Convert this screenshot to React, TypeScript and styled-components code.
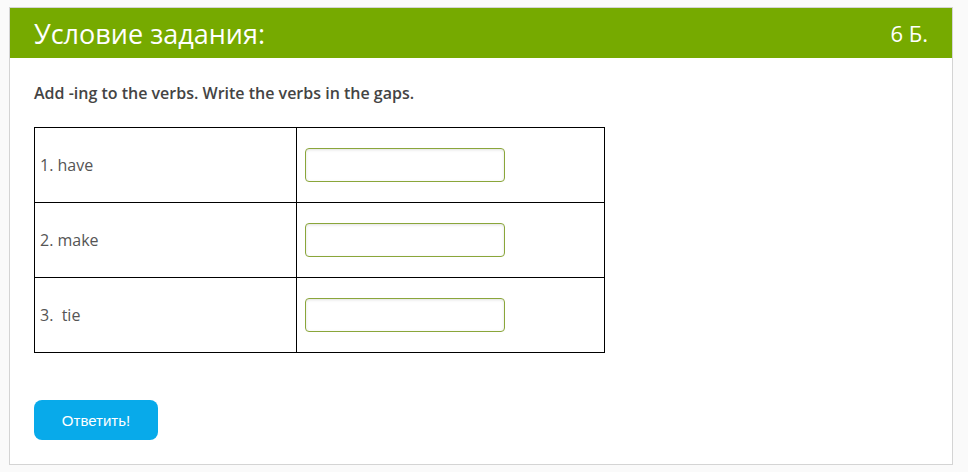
import React from 'react';
import styled, { createGlobalStyle } from 'styled-components';

const GlobalStyle = createGlobalStyle`
  html, body {
    margin: 0;
    padding: 0;
    background: #fafafa;
    font-family: "Open Sans", "Liberation Sans", sans-serif;
  }
`;

const Page = styled.div`
  padding: 7px 15px 6px 9px;
`;

const Card = styled.div`
  background: #fff;
  border: 1px solid #d4d4d4;
  height: 458px;
  box-sizing: border-box;
  display: flex;
  flex-direction: column;
`;

const Header = styled.div`
  background: #76aa00;
  color: #fff;
  height: 50px;
  display: flex;
  align-items: center;
  justify-content: space-between;
  padding: 0 24px 0 24px;
`;

const Title = styled.h2`
  margin: 0;
  font-size: 27px;
  font-weight: 400;
`;

const Points = styled.span`
  font-size: 22px;
`;

const Body = styled.div`
  padding: 23px 24px 0 24px;
`;

const Task = styled.p`
  margin: 0 0 22px 0;
  font-size: 16px;
  font-weight: 600;
  color: #444;
  line-height: 24px;
`;

const Table = styled.table`
  border-collapse: collapse;
  table-layout: fixed;
  width: 571px;
`;

const Row = styled.tr`
  height: 75px;
`;

const Cell = styled.td<{ $w?: number }>`
  border: 1px solid #000;
  padding: 0 8px 0 5px;
  font-size: 16px;
  color: #555;
  width: ${p => (p.$w ? `${p.$w}px` : 'auto')};
  vertical-align: middle;
  white-space: pre;
`;

const Answer = styled.input`
  display: block;
  width: 200px;
  height: 34px;
  box-sizing: border-box;
  border: 1px solid #8aa63a;
  border-radius: 4px;
  box-shadow: inset 0 1px 3px rgba(0, 0, 0, 0.12);
  outline: none;
  font-family: inherit;
  font-size: 14px;
  padding: 0 8px;
  margin-left: 3px;
`;

const Submit = styled.button`
  margin-top: 47px;
  width: 124px;
  height: 40px;
  border: none;
  border-radius: 8px;
  background: #08aaea;
  color: #fff;
  font-family: "Liberation Sans", Arial, sans-serif;
  font-size: 15px;
  cursor: pointer;
`;

const items = ['1. have', '2. make', '3.  tie'];

export default function App() {
  return (
    <>
      <GlobalStyle />
      <Page>
        <Card>
          <Header>
            <Title>Условие задания:</Title>
            <Points>6 Б.</Points>
          </Header>
          <Body>
            <Task>Add -ing to the verbs. Write the verbs in the gaps.</Task>
            <Table>
              <tbody>
                {items.map(item => (
                  <Row key={item}>
                    <Cell $w={248}>{item}</Cell>
                    <Cell>
                      <Answer type="text" />
                    </Cell>
                  </Row>
                ))}
              </tbody>
            </Table>
            <Submit type="button">Ответить!</Submit>
          </Body>
        </Card>
      </Page>
    </>
  );
}
